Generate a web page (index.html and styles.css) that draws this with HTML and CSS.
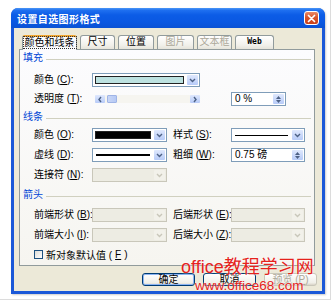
FILE: index.html
```html
<!DOCTYPE html>
<html lang="zh-CN">
<head>
  <meta charset="UTF-8">
  <title>设置自选图形格式</title>
  <link rel="stylesheet" href="styles.css">
</head>
<body>
  <div class="frame">
    <div class="window">
      <div class="titlebar">
        <span>设置自选图形格式</span>
        <span class="close"><svg width="9" height="9" viewBox="0 0 9 9"><path d="M1.5 1.5l6 6M7.5 1.5l-6 6" stroke="#fff" stroke-width="1.7" stroke-linecap="round"/></svg></span>
      </div>

      <div class="body">
        <div class="tabs">
          <div class="tab on t1"><span>颜色和线条</span></div>
          <div class="tab t2">尺寸</div>
          <div class="tab t3">位置</div>
          <div class="tab t4 dim">图片</div>
          <div class="tab t5 dim">文本框</div>
          <div class="tab t6 web">Web</div>
        </div>

        <div class="panel">
          <!-- 填充 -->
          <div class="sec">填充</div>
          <div class="grid fill">
            <label>颜色 (<u>C</u>):</label>
            <div class="combo"><div class="sw teal"></div><div class="arr"><svg width="7" height="5" viewBox="0 0 7 5"><path d="M1 1l2.5 2.5L6 1" fill="none" stroke="#4d6185" stroke-width="1.4"/></svg></div></div>
            <span></span>
            <span></span>

            <label>透明度 (<u>T</u>):</label>
            <div class="slider">
              <div class="sbtn"><svg width="6" height="7" viewBox="0 0 6 7"><path d="M4 1L2 3.5 4 6" fill="none" stroke="#4d6185" stroke-width="1.4"/></svg></div>
              <div class="thumb"></div>
              <div class="track"></div>
              <div class="sbtn"><svg width="6" height="7" viewBox="0 0 6 7"><path d="M2 1l2 2.5L2 6" fill="none" stroke="#4d6185" stroke-width="1.4"/></svg></div>
            </div>
            <span></span>
            <div class="spin"><span class="val">0 %</span><div class="sarr"><svg width="5" height="3" viewBox="0 0 5 3"><path d="M0 3L2.5 0 5 3z" fill="#4d6185"/></svg><svg width="5" height="3" viewBox="0 0 5 3"><path d="M0 0h5L2.5 3z" fill="#4d6185"/></svg></div></div>
          </div>

          <!-- 线条 -->
          <div class="sec">线条</div>
          <div class="grid lines">
            <label>颜色 (<u>O</u>):</label>
            <div class="combo"><div class="sw black"></div><div class="arr"><svg width="7" height="5" viewBox="0 0 7 5"><path d="M1 1l2.5 2.5L6 1" fill="none" stroke="#4d6185" stroke-width="1.4"/></svg></div></div>
            <span></span>
            <label>样式 (<u>S</u>):</label>
            <div class="combo"><div class="ln thin"></div><div class="arr"><svg width="7" height="5" viewBox="0 0 7 5"><path d="M1 1l2.5 2.5L6 1" fill="none" stroke="#4d6185" stroke-width="1.4"/></svg></div></div>

            <label>虚线 (<u>D</u>):</label>
            <div class="combo"><div class="ln thick"></div><div class="arr"><svg width="7" height="5" viewBox="0 0 7 5"><path d="M1 1l2.5 2.5L6 1" fill="none" stroke="#4d6185" stroke-width="1.4"/></svg></div></div>
            <span></span>
            <label>粗细 (<u>W</u>):</label>
            <div class="spin"><span class="val">0.75 磅</span><div class="sarr"><svg width="5" height="3" viewBox="0 0 5 3"><path d="M0 3L2.5 0 5 3z" fill="#4d6185"/></svg><svg width="5" height="3" viewBox="0 0 5 3"><path d="M0 0h5L2.5 3z" fill="#4d6185"/></svg></div></div>

            <label>连接符 (<u>N</u>):</label>
            <div class="combo off"><div class="fillx"></div><div class="arr"><svg width="7" height="5" viewBox="0 0 7 5"><path d="M1 1l2.5 2.5L6 1" fill="none" stroke="#c9c7ba" stroke-width="1.4"/></svg></div></div>
          </div>

          <!-- 箭头 -->
          <div class="sec">箭头</div>
          <div class="grid arrows">
            <label>前端形状 (<u>B</u>):</label>
            <div class="combo off"><div class="fillx"></div><div class="arr"><svg width="7" height="5" viewBox="0 0 7 5"><path d="M1 1l2.5 2.5L6 1" fill="none" stroke="#c9c7ba" stroke-width="1.4"/></svg></div></div>
            <span></span>
            <label>后端形状 (<u>E</u>):</label>
            <div class="combo off"><div class="fillx"></div><div class="arr"><svg width="7" height="5" viewBox="0 0 7 5"><path d="M1 1l2.5 2.5L6 1" fill="none" stroke="#c9c7ba" stroke-width="1.4"/></svg></div></div>

            <label>前端大小 (<u>I</u>):</label>
            <div class="combo off"><div class="fillx"></div><div class="arr"><svg width="7" height="5" viewBox="0 0 7 5"><path d="M1 1l2.5 2.5L6 1" fill="none" stroke="#c9c7ba" stroke-width="1.4"/></svg></div></div>
            <span></span>
            <label>后端大小 (<u>Z</u>):</label>
            <div class="combo off"><div class="fillx"></div><div class="arr"><svg width="7" height="5" viewBox="0 0 7 5"><path d="M1 1l2.5 2.5L6 1" fill="none" stroke="#c9c7ba" stroke-width="1.4"/></svg></div></div>
          </div>

          <div class="check"><span class="box"></span>新对象默认值 (<u>F</u>)</div>
        </div>

        <div class="btns">
          <div class="btn def">确定</div>
          <div class="btn">取消</div>
          <div class="btn off">预览 (<u>P</u>)</div>
        </div>
      </div>
    </div>
  </div>

  <div class="mark">
    <div class="m1">office教程学习网</div>
    <div class="m2">www.office68.com</div>
  </div>
</body>
</html>
```

FILE: styles.css
```css
* { box-sizing: border-box; margin: 0; padding: 0; }
html, body { width: 336px; height: 305px; overflow: hidden; background: #fff; }
body { font-family: "Liberation Sans", "Noto Sans CJK SC", sans-serif; font-size: 10px; color: #000; position: relative; }
u { text-decoration: underline; }

.frame { width: 331px; height: 300px; border-right: 1px solid #dcdcdc; border-bottom: 1px solid #dcdcdc; padding: 8px 0 0 11px; }
.window { width: 314px; height: 286px; background: #1a58d8; border-radius: 7px 7px 0 0; padding: 0 3px 3px; display: flex; flex-direction: column; box-shadow: 1px 1px 2px rgba(0,0,0,0.2); }

/* title bar */
.titlebar { height: 20px; margin: 0 -3px; padding: 0 6px; display: flex; align-items: center; justify-content: space-between; color: #fff; font-weight: 700; font-size: 10px; letter-spacing: 0.4px; border-radius: 7px 7px 0 0;
  background: linear-gradient(#4a96f6 0%, #1e6ff0 12%, #0c5ce6 35%, #0a58e2 70%, #0a52d4 100%); }
.close { width: 15px; height: 14px; border: 1px solid #fff; border-radius: 3px; display: flex; align-items: center; justify-content: center;
  background: linear-gradient(#e98a68, #d9552c 45%, #c7401b); }

/* dialog body */
.body { flex: 1; background: #ece9d8; padding: 7px 7px 5px 5px; display: flex; flex-direction: column; }

.tabs { display: flex; gap: 3px; height: 14px; padding-left: 3px; position: relative; z-index: 1; }
.tab { height: 14px; border: 1px solid #919b9c; border-bottom: none; border-radius: 3px 3px 0 0; background: linear-gradient(#fff, #f1f0ea 70%, #e6e4da); text-align: center; line-height: 12px; font-size: 10px; }
.tab.on { height: 15px; background: #fcfcfe; border-top: 2px solid #f0a530; line-height: 11px; }
.tab.on span { outline: 1px dotted #333; padding: 0 1px; }
.tab.dim { color: #aca899; }
.tab.web { font-family: "DejaVu Sans Mono", monospace; font-weight: 700; font-size: 8px; }
.t1 { width: 55px; }
.t2 { width: 35px; }
.t3 { width: 36px; }
.t4 { width: 37px; }
.t5 { width: 35px; }
.t6 { width: 39px; }

.panel { height: 217px; border: 1px solid #919b9c; background: linear-gradient(#fcfcfe, #f6f5f0); padding: 2px 3px 0 3px; }

.sec { height: 12px; display: flex; align-items: center; gap: 3px; color: #0046d5; line-height: 12px; }
.sec::after { content: ''; flex: 1; height: 1px; margin-top: 2px; background: #d0d0bf; }

.grid { display: grid; padding-left: 11px; align-items: center; }
.grid label { white-space: nowrap; line-height: 12px; }
.fill { grid-template-columns: 58px 108px 31px 55px; grid-template-rows: 20px 18px; margin-top: 6px; margin-bottom: 3px; }
.lines { grid-template-columns: 58px 75px 6px 58px 74px; grid-auto-rows: 20px; margin-top: 2px; margin-bottom: 4px; }
.arrows { grid-template-columns: 58px 75px 6px 58px 74px; grid-auto-rows: 20px; margin-top: 4px; }

/* combo boxes */
.combo { height: 14px; border: 1px solid #7f9db9; background: #fff; display: flex; }
.combo .arr { width: 11px; margin: 1px; border-radius: 1px; background: linear-gradient(#dfe8fd, #b7cbf8); display: flex; align-items: center; justify-content: center; }
.combo .sw { flex: 1; margin: 2px; border: 1px solid #222; }
.teal { background: #bde2e0; }
.black { background: #000; }
.combo .ln { flex: 1; margin: auto 3px; background: #000; }
.ln.thin { height: 1px; }
.ln.thick { height: 2px; }
.combo.off { border-color: #c9c7ba; background: #edece3; }
.combo.off .fillx { flex: 1; }
.combo.off .arr { background: #f2f1ea; }

/* slider */
.slider { height: 8px; margin-left: 3px; display: flex; background: #f6f5f0; }
.sbtn { width: 10px; height: 8px; border-radius: 1px; background: linear-gradient(#dfe8fd, #b7cbf8); display: flex; align-items: center; justify-content: center; }
.thumb { width: 10px; height: 8px; margin-left: 2px; border-radius: 1px; background: linear-gradient(90deg, #c8d6f6, #b6c9f5); border: 1px solid #9fb4e6; }
.track { flex: 1; }

/* spin boxes */
.spin { height: 14px; border: 1px solid #7f9db9; background: #fff; display: flex; }
.spin .val { flex: 1; padding-left: 3px; line-height: 12px; }
.sarr { width: 11px; margin: 1px; border-radius: 1px; background: linear-gradient(#dfe8fd, #b7cbf8); display: flex; flex-direction: column; align-items: center; justify-content: center; gap: 1px; }

.check { height: 18px; padding-left: 11px; display: flex; align-items: center; gap: 3px; }
.box { width: 9px; height: 9px; border: 1px solid #1c5180; background: linear-gradient(135deg, #dcdcd7, #fff); }

/* buttons */
.btns { display: flex; justify-content: flex-end; gap: 8px; margin-top: 7px; margin-right: -2px; }
.btn { width: 53px; height: 13px; border: 1px solid #003c74; border-radius: 3px; background: linear-gradient(#fff, #f0efe8 80%, #d8d2c6); text-align: center; line-height: 11px; }
.btn.def { box-shadow: inset 0 0 0 1px #8cb4f2; }
.btn.off { border-color: #c9c7ba; color: #aca899; }

/* watermark over the dialog */
.mark { position: absolute; left: 181px; top: 257px; color: #e5221c; text-shadow: 0 0 2px #fff; }
.m1 { font-size: 18px; line-height: 21px; }
.m2 { font-size: 13.5px; line-height: 15px; margin-left: 14px; }
```
